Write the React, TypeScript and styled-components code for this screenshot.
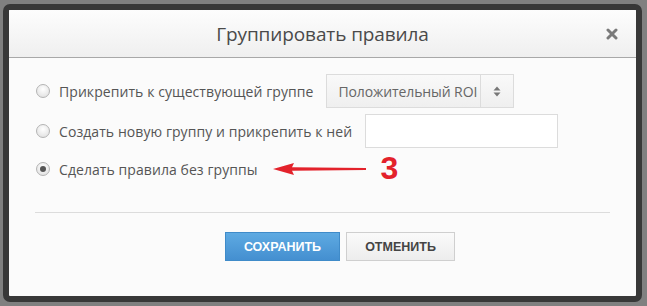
import * as React from "react";
import styled, { createGlobalStyle } from "styled-components";

const GlobalStyle = createGlobalStyle`
  html, body {
    margin: 0;
    padding: 0;
    background: #808080;
    font-family: "Open Sans", "Noto Sans", sans-serif;
  }
`;

const Page = styled.div`
  width: 647px;
  height: 306px;
  padding: 4px 5px 4px 3px;
  box-sizing: border-box;
  display: flex;
`;

const Dialog = styled.div`
  flex: 1;
  display: flex;
  flex-direction: column;
  border: 6px solid #383838;
  border-radius: 7px;
  background: #fbfbfb;
  overflow: hidden;
`;

const Header = styled.div`
  height: 47px;
  flex: none;
  display: grid;
  grid-template-columns: 1fr auto 1fr;
  align-items: center;
  padding: 0 18px 0 18px;
  background: linear-gradient(#fdfdfd, #efefef);
  border-bottom: 1px solid #a8a8a8;
`;

const Title = styled.h2`
  grid-column: 2;
  margin: 0;
  font-size: 19px;
  font-weight: 400;
  color: #4a4a4a;
  letter-spacing: -0.1px;
`;

const Close = styled.button`
  justify-self: end;
  border: 0;
  padding: 0;
  background: none;
  display: flex;
  cursor: pointer;
`;

const Body = styled.div`
  padding: 16px 26px 0 26px;
  display: flex;
  flex-direction: column;
`;

const Options = styled.div`
  display: flex;
  flex-direction: column;
  gap: 6px;
`;

const Row = styled.label<{ $h?: number }>`
  display: flex;
  align-items: center;
  height: ${(p) => p.$h ?? 34}px;
  font-size: 14px;
  letter-spacing: 0.07px;
  color: #555;
  cursor: pointer;
`;

const Radio = styled.span<{ $checked?: boolean }>`
  width: 14px;
  height: 14px;
  box-sizing: border-box;
  border-radius: 50%;
  border: 1px solid #b4b4b4;
  background: radial-gradient(circle at 50% 35%, #ffffff, #dcdcdc);
  margin: 0 9px 0 1px;
  display: flex;
  align-items: center;
  justify-content: center;
  flex: none;

  &::after {
    content: "";
    display: ${(p) => (p.$checked ? "block" : "none")};
    width: 6px;
    height: 6px;
    border-radius: 50%;
    background: #555;
  }
`;

const Select = styled.div`
  margin-left: 13px;
  width: 188px;
  height: 34px;
  box-sizing: border-box;
  display: flex;
  border: 1px solid #dcdcdc;
  background: linear-gradient(#f9f9f9, #efefef);
  color: #666;
`;

const SelectValue = styled.span`
  flex: 1;
  padding-left: 11px;
  display: flex;
  align-items: center;
  white-space: nowrap;
  overflow: hidden;
  letter-spacing: -0.1px;
  border-right: 1px solid #dcdcdc;
`;

const SelectArrows = styled.span`
  width: 32px;
  display: flex;
  align-items: center;
  justify-content: center;
`;

const TextInput = styled.input`
  margin-left: 13px;
  width: 193px;
  height: 34px;
  box-sizing: border-box;
  border: 1px solid #dcdcdc;
  background: #fff;
  outline: none;
`;

const Annotation = styled.span`
  margin-left: 15px;
  display: flex;
  align-items: center;
  gap: 14px;
`;

const Mark = styled.span`
  font-family: "Liberation Sans", Arial, sans-serif;
  font-size: 32px;
  font-weight: 700;
  color: #e3222b;
  line-height: 1;
  margin-top: -2px;
`;

const Divider = styled.hr`
  margin: 28px 0 0 0;
  border: 0;
  border-top: 1px solid #dcdcdc;
`;

const Footer = styled.div`
  display: flex;
  gap: 6px;
  padding: 19px 0 0 190px;
`;

const Button = styled.button<{ $primary?: boolean }>`
  height: 29px;
  box-sizing: border-box;
  padding: 0;
  width: ${(p) => (p.$primary ? 115 : 109)}px;
  font-family: "Liberation Sans", Arial, sans-serif;
  font-size: 12.5px;
  font-weight: 700;
  text-transform: uppercase;
  cursor: pointer;
  border: 1px solid ${(p) => (p.$primary ? "#3f8bc9" : "#cfcfcf")};
  color: ${(p) => (p.$primary ? "#fff" : "#444")};
  background: ${(p) =>
    p.$primary
      ? "linear-gradient(#5eaae2, #448fd0)"
      : "linear-gradient(#fafafa, #ededed)"};
`;

export default function App() {
  const [mode, setMode] = React.useState(3);

  return (
    <>
      <GlobalStyle />
      <Page>
        <Dialog>
          <Header>
            <Title>Группировать правила</Title>
            <Close aria-label="close">
              <svg width="12" height="12" viewBox="0 0 12 12">
                <path d="M2 2 L10 10 M10 2 L2 10" stroke="#7a7a7a" strokeWidth="3" strokeLinecap="round" />
              </svg>
            </Close>
          </Header>
          <Body>
            <Options>
              <Row onClick={() => setMode(1)}>
                <Radio $checked={mode === 1} />
                Прикрепить к существующей группе
                <Select>
                  <SelectValue>Положительный ROI</SelectValue>
                  <SelectArrows>
                    <svg width="8" height="11" viewBox="0 0 8 11">
                      <path d="M4 0.5 L7.5 4.5 H0.5 Z M4 10.5 L7.5 6.5 H0.5 Z" fill="#777" />
                    </svg>
                  </SelectArrows>
                </Select>
              </Row>
              <Row onClick={() => setMode(2)}>
                <Radio $checked={mode === 2} />
                Создать новую группу и прикрепить к ней
                <TextInput type="text" />
              </Row>
              <Row $h={30} onClick={() => setMode(3)}>
                <Radio $checked={mode === 3} />
                Сделать правила без группы
                <Annotation>
                  <svg width="94" height="16" viewBox="0 0 94 16">
                    <path d="M0 8 L21 2 L19 6.3 L93 7 L93 9 L19 9.7 L21 14 Z" fill="#e3222b" />
                  </svg>
                  <Mark>3</Mark>
                </Annotation>
              </Row>
            </Options>
            <Divider />
            <Footer>
              <Button $primary>Сохранить</Button>
              <Button>Отменить</Button>
            </Footer>
          </Body>
        </Dialog>
      </Page>
    </>
  );
}
